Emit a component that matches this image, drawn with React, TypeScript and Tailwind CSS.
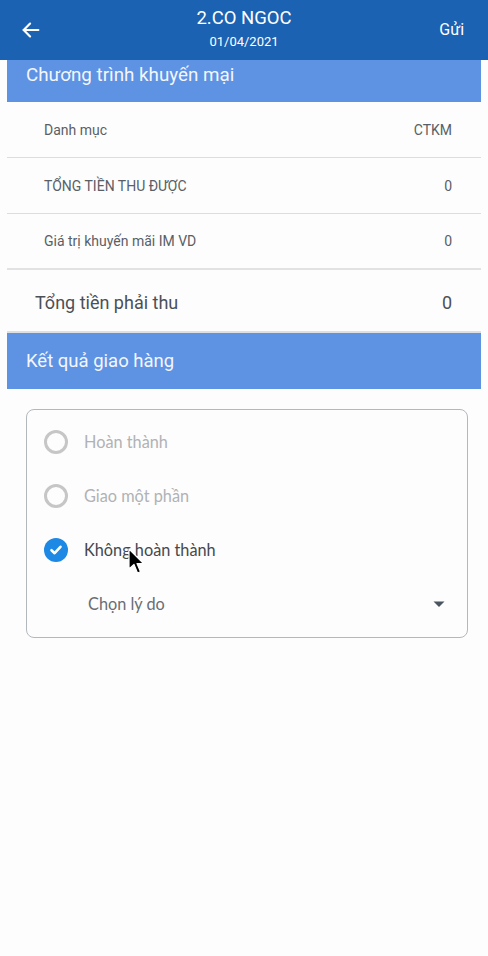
import React from "react";

const font = { fontFamily: "Roboto, 'Noto Sans', sans-serif" };
const labelFont = { fontFamily: "Lato, 'Open Sans', sans-serif" };

const rows = [
  { label: "Danh mục", value: "CTKM" },
  { label: "TỔNG TIỀN THU ĐƯỢC", value: "0" },
  { label: "Giá trị khuyến mãi IM VD", value: "0" },
];

const options = [
  { label: "Hoàn thành", checked: false },
  { label: "Giao một phần", checked: false },
  { label: "Không hoàn thành", checked: true },
];

const Radio = ({ checked }: { checked: boolean }) =>
  checked ? (
    <span className="flex h-[24px] w-[24px] items-center justify-center rounded-full bg-[#1e88e5]">
      <svg width="14" height="14" viewBox="0 0 14 14">
        <path d="M2.5 7.2 L5.6 10.2 L11.5 3.8" fill="none" stroke="#fff" strokeWidth="2.6" strokeLinecap="round" strokeLinejoin="round" />
      </svg>
    </span>
  ) : (
    <span className="h-[24px] w-[24px] rounded-full border-[3px] border-[#c6c6c6]" />
  );

export default function App() {
  return (
    <div className="relative min-h-[956px] w-full bg-[#fdfdfd]" style={font}>
      <header className="flex h-[60px] items-center bg-[#1b62b2] px-[20px] text-white">
        <div className="flex flex-1">
          <svg width="22" height="22" viewBox="0 0 24 24" fill="none" stroke="#fff" strokeWidth="2.4" strokeLinecap="round" strokeLinejoin="round">
            <path d="M20 12H4" />
            <path d="M11 5l-7 7 7 7" />
          </svg>
        </div>
        <div className="flex flex-col items-center pb-[3px]">
          <span className="text-[18.5px] leading-[22px]">2.CO NGOC</span>
          <span className="mt-[5px] text-[13px] leading-[16px]">01/04/2021</span>
        </div>
        <div className="flex flex-1 justify-end">
          <span className="pr-[4px] text-[16px]">Gửi</span>
        </div>
      </header>

      <div className="mx-[7px]">
        <div className="flex h-[42px] items-center bg-[#5e92e3] pl-[19px] pb-[11px] text-[18.8px] text-[#f3f6fc]">
          Chương trình khuyến mại
        </div>
        {rows.map((r, i) => (
          <div
            key={r.label}
            className={`flex h-[56px] items-center justify-between pl-[37px] pr-[29px] pt-[1px] text-[14px] text-[#5a5f66] ${i === 2 ? "border-b-2 border-[#e2e2e4]" : "border-b border-[#dcdde3]"}`}
          >
            <span>{r.label}</span>
            <span>{r.value}</span>
          </div>
        ))}
        <div className="flex h-[63px] items-center justify-between border-b-2 border-[#dedfe1] pl-[28px] pr-[29px] pt-[3px] text-[18px] text-[#4b5057]">
          <span>Tổng tiền phải thu</span>
          <span>0</span>
        </div>
        <div className="flex h-[56px] items-center bg-[#5e92e3] pl-[19px] pt-[1px] text-[18.5px] text-[#f3f6fc]">
          Kết quả giao hàng
        </div>

        <div className="ml-[19px] mr-[13px] mt-[20px] rounded-[8px] border border-[#b3b8bd] pl-[17px] pr-[22px] pt-[5px] pb-[6px]" style={labelFont}>
          {options.map((o) => (
            <div key={o.label} className="flex h-[54px] items-center gap-[16px]">
              <Radio checked={o.checked} />
              <span className={`text-[16.3px] ${o.checked ? "text-[#45494e]" : "text-[#b0b2b5]"}`}>{o.label}</span>
            </div>
          ))}
          <div className="flex h-[54px] items-center justify-between pl-[44px]">
            <span className="text-[16.3px] text-[#6a6e73]">Chọn lý do</span>
            <svg width="12" height="8" viewBox="0 0 12 8">
              <path d="M0.5 1.5 H11.5 L6 7 Z" fill="#4a5560" />
            </svg>
          </div>
        </div>
      </div>

      <svg className="absolute left-[128px] top-[548px]" width="18" height="28" viewBox="0 0 18 28">
        <path d="M1 1 L1 21 L6 16.5 L9.5 25 L12.5 23.8 L9 15.5 L15.5 15.5 Z" fill="#000" stroke="#fff" strokeWidth="1.2" strokeLinejoin="round" />
      </svg>
    </div>
  );
}
